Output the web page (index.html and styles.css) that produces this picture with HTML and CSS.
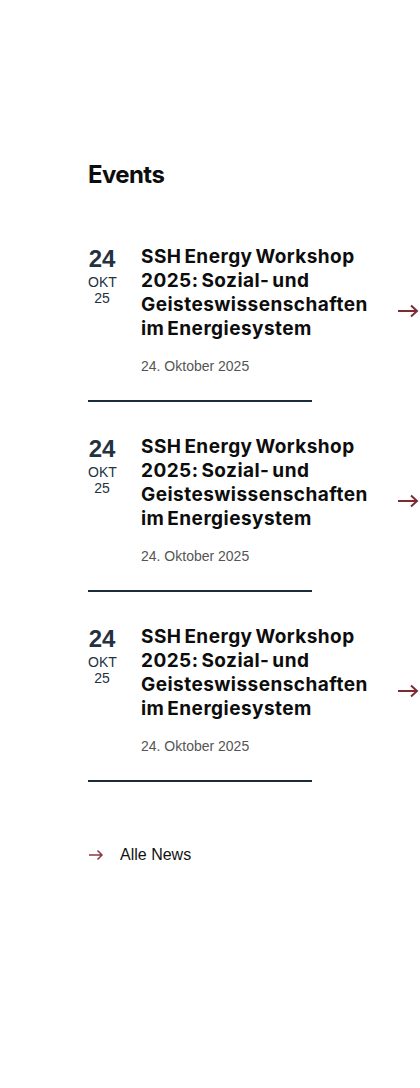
FILE: index.html
```html
<!DOCTYPE html>
<html lang="de">
<head>
<meta charset="utf-8">
<link rel="stylesheet" href="styles.css">
</head>
<body>
<section class="events">
  <h2 class="events-title">Events</h2>
  <div class="event">
    <div class="event-row">
      <div class="event-date">
        <div class="day">24</div>
        <div class="mon">OKT</div>
        <div class="yr">25</div>
      </div>
      <div class="event-body">
        <h3 class="event-name">SSH Energy Workshop 2025: Sozial- und Geisteswissenschaften im Energiesystem</h3>
        <p class="event-when">24. Oktober 2025</p>
      </div>
      <svg class="event-arrow" width="22" height="14" viewBox="0 0 22 14"><path d="M1 7h19M14 1.5l6 5.5-6 5.5" fill="none" stroke="#7e2a33" stroke-width="2"/></svg>
    </div>
    <div class="event-rule"></div>
  </div>
  <div class="event">
    <div class="event-row">
      <div class="event-date">
        <div class="day">24</div>
        <div class="mon">OKT</div>
        <div class="yr">25</div>
      </div>
      <div class="event-body">
        <h3 class="event-name">SSH Energy Workshop 2025: Sozial- und Geisteswissenschaften im Energiesystem</h3>
        <p class="event-when">24. Oktober 2025</p>
      </div>
      <svg class="event-arrow" width="22" height="14" viewBox="0 0 22 14"><path d="M1 7h19M14 1.5l6 5.5-6 5.5" fill="none" stroke="#7e2a33" stroke-width="2"/></svg>
    </div>
    <div class="event-rule"></div>
  </div>
  <div class="event">
    <div class="event-row">
      <div class="event-date">
        <div class="day">24</div>
        <div class="mon">OKT</div>
        <div class="yr">25</div>
      </div>
      <div class="event-body">
        <h3 class="event-name">SSH Energy Workshop 2025: Sozial- und Geisteswissenschaften im Energiesystem</h3>
        <p class="event-when">24. Oktober 2025</p>
      </div>
      <svg class="event-arrow" width="22" height="14" viewBox="0 0 22 14"><path d="M1 7h19M14 1.5l6 5.5-6 5.5" fill="none" stroke="#7e2a33" stroke-width="2"/></svg>
    </div>
    <div class="event-rule"></div>
  </div>
  <a class="all-link" href="#">
    <svg class="all-arrow" width="16" height="12" viewBox="0 0 16 12"><path d="M1 6h13M9.5 1.5l4.5 4.5-4.5 4.5" fill="none" stroke="#8a3a42" stroke-width="1.5"/></svg>
    <span>Alle News</span>
  </a>
</section>
</body>
</html>
```

FILE: styles.css
```css
html, body {
  margin: 0;
  padding: 0;
  background: #fff;
}
body {
  font-family: "Liberation Sans", Arial, sans-serif;
  color: #111;
  overflow-x: hidden;
}
.events {
  padding: 160px 0 0 88px;
}
.events-title {
  margin: 0 0 55px;
  font-family: Inter, "Liberation Sans", sans-serif;
  font-weight: 700;
  font-size: 24px;
  line-height: 30px;
  letter-spacing: -0.6px;
  color: #0d0d0d;
}
.event {
  margin-bottom: 33px;
}
.event-row {
  display: flex;
  align-items: center;
}
.event-date {
  align-self: flex-start;
  width: 28px;
  margin-right: 25px;
  text-align: center;
  color: #243240;
}
.day {
  font-family: "Liberation Sans", Arial, sans-serif;
  font-weight: 700;
  font-size: 24px;
  line-height: 28px;
}
.mon, .yr {
  font-size: 14px;
  line-height: 16px;
}
.mon { margin-top: 1px; }
.event-body {
  width: 240px;
  margin-right: 16px;
}
.event-name {
  margin: 0;
  font-family: Inter, "Liberation Sans", sans-serif;
  font-weight: 700;
  font-size: 19px;
  line-height: 24px;
  letter-spacing: 0.45px;
  word-spacing: -2px;
  color: #0d0d0d;
}
.event-when {
  margin: 15px 0 0;
  font-size: 14px;
  line-height: 20px;
  color: #555;
}
.event-arrow {
  flex: none;
  display: block;
}
.event-rule {
  width: 224px;
  height: 2px;
  margin-top: 24px;
  background: #1e2c39;
}
.all-link {
  display: flex;
  align-items: center;
  margin-top: 63px;
  text-decoration: none;
  color: #111;
  font-size: 16px;
  line-height: 20px;
}
.all-arrow {
  display: block;
  margin-right: 16px;
}
```
